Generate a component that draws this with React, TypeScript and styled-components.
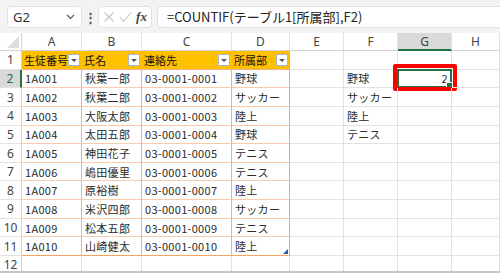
import React from "react";
import styled, { createGlobalStyle, css } from "styled-components";

const GlobalStyle = createGlobalStyle`
  html, body {
    margin: 0;
    padding: 0;
    background: #ffffff;
  }
  body {
    font-family: "Noto Sans CJK JP", "Noto Sans", sans-serif;
  }
`;

const Frame = styled.div`
  width: 500px;
  height: 274px;
  overflow: hidden;
  display: flex;
  flex-direction: column;
  background: #ffffff;
`;

const Toolbar = styled.div`
  height: 33px;
  background: #f3f3f3;
  display: flex;
  align-items: center;
  padding: 0 0 0 7px;
  box-sizing: border-box;
  flex-shrink: 0;
`;

const NameBox = styled.div`
  width: 75px;
  height: 22px;
  background: #ffffff;
  border: 1px solid #e1e1e1;
  border-radius: 4px;
  box-sizing: border-box;
  display: flex;
  align-items: center;
  justify-content: space-between;
  padding: 0 6px 0 5px;
  font-family: "Noto Sans", sans-serif;
  font-size: 13px;
  color: #333333;
`;

const Dots = styled.div`
  width: 16px;
  display: flex;
  justify-content: center;
  color: #555555;
  font-size: 13px;
  font-weight: bold;
`;

const FxBox = styled.div`
  width: 54px;
  height: 22px;
  background: #ffffff;
  border: 1px solid #e1e1e1;
  border-radius: 4px;
  box-sizing: border-box;
  display: flex;
  align-items: center;
  justify-content: space-around;
  padding: 0 2px;
  margin-right: 5px;
`;

const FxLabel = styled.span`
  font-family: "Liberation Serif", serif;
  font-style: italic;
  font-weight: bold;
  font-size: 13px;
  color: #444444;
`;

const FormulaBox = styled.div`
  flex: 1;
  height: 22px;
  background: #ffffff;
  border: 1px solid #e1e1e1;
  border-right: none;
  border-radius: 4px 0 0 4px;
  box-sizing: border-box;
  display: flex;
  align-items: center;
  padding-left: 9px;
  font-size: 13px;
  color: #222222;
  white-space: nowrap;
`;

const Sheet = styled.div`
  display: grid;
  grid-template-columns: 22px 60px 60px 90px 58px 54px 54px 54px 48px;
  grid-auto-rows: 18.65px;
  grid-template-rows: 18px;
  border-bottom: 2px solid #c6c6c6;
  flex-shrink: 0;
  height: 240px;
  overflow: hidden;
  box-sizing: border-box;
`;

type CellKind = "plain" | "head" | "data";

const Cell = styled.div<{
  $kind?: CellKind;
  $right?: boolean;
  $lastCol?: boolean;
  $lastRow?: boolean;
}>`
  position: relative;
  box-sizing: border-box;
  display: flex;
  align-items: center;
  padding: 0 3px;
  font-size: 11px;
  letter-spacing: 0.3px;
  color: #2a2a2a;
  white-space: nowrap;
  overflow: visible;
  border-right: 1px solid #e2e2e2;
  border-bottom: 1px solid #e2e2e2;
  justify-content: ${(p) => (p.$right ? "flex-end" : "flex-start")};

  ${(p) =>
    p.$kind === "head" &&
    css`
      background: #ffc000;
      color: #111111;
      letter-spacing: 0;
      padding-left: 2px;
      border-right: 1px solid #f4b084;
      border-bottom: 1px solid #f4b084;
    `}

  ${(p) =>
    p.$kind === "data" &&
    css`
      border-right: 1px solid #f4b084;
      border-bottom: 1px solid #f8cbad;
    `}

  ${(p) =>
    p.$lastCol &&
    css`
      border-right: 1px solid #f4a460;
    `}

  ${(p) =>
    p.$lastRow &&
    css`
      border-bottom: 1px solid #f4a460;
    `}
`;

const ColHeader = styled.div<{ $selected?: boolean }>`
  box-sizing: border-box;
  display: flex;
  align-items: center;
  justify-content: center;
  font-family: "Noto Sans", sans-serif;
  font-size: 12px;
  color: #444444;
  background: ${(p) => (p.$selected ? "#d9d9d9" : "#ffffff")};
  border-right: 1px solid #e2e2e2;
  border-bottom: ${(p) => (p.$selected ? "2px solid #217346" : "1px solid #d4d4d4")};
`;

const Corner = styled.div`
  position: relative;
  box-sizing: border-box;
  background: #ffffff;
  border-right: 1px solid #d4d4d4;
  border-bottom: 1px solid #d4d4d4;

  &::after {
    content: "";
    position: absolute;
    right: 2px;
    bottom: 2px;
    width: 0;
    height: 0;
    border-left: 12px solid transparent;
    border-bottom: 12px solid #dedede;
  }
`;

const RowHeader = styled.div<{ $selected?: boolean }>`
  box-sizing: border-box;
  display: flex;
  align-items: center;
  justify-content: center;
  font-family: "Noto Sans", sans-serif;
  font-size: 12px;
  color: ${(p) => (p.$selected ? "#217346" : "#444444")};
  background: ${(p) => (p.$selected ? "#d9d9d9" : "#ffffff")};
  border-right: ${(p) => (p.$selected ? "2px solid #217346" : "1px solid #d4d4d4")};
  border-bottom: 1px solid #e2e2e2;
`;

const FilterButton = styled.span`
  position: absolute;
  right: 1px;
  top: 3px;
  width: 12px;
  height: 12px;
  background: #ffffff;
  border: 1px solid #a9b5c9;
  box-sizing: border-box;
  display: flex;
  align-items: center;
  justify-content: center;

  &::after {
    content: "";
    border-left: 3px solid transparent;
    border-right: 3px solid transparent;
    border-top: 3px solid #555555;
  }
`;

const ResizeHandle = styled.span`
  position: absolute;
  right: 1px;
  bottom: 1px;
  width: 0;
  height: 0;
  border-left: 5px solid transparent;
  border-bottom: 5px solid #2f4fb3;
`;

const Highlight = styled.div`
  position: absolute;
  left: -5px;
  top: -6px;
  right: -6px;
  bottom: -4px;
  border: 4px solid #ff0000;
  border-radius: 2px;
  pointer-events: none;
`;

const Selection = styled.div`
  position: absolute;
  inset: -1px;
  border: 2px solid #217346;
  pointer-events: none;

  &::after {
    content: "";
    position: absolute;
    right: -3px;
    bottom: -3px;
    width: 5px;
    height: 5px;
    background: #217346;
    border: 1px solid #ffffff;
  }
`;

const Chevron = () => (
  <svg width="9" height="6" viewBox="0 0 9 6">
    <path d="M1 1l3.5 3.5L8 1" fill="none" stroke="#555" strokeWidth="1.2" />
  </svg>
);

const CrossIcon = () => (
  <svg width="12" height="12" viewBox="0 0 12 12">
    <path d="M1.5 1.5l9 9M10.5 1.5l-9 9" stroke="#c4c4c4" strokeWidth="1.1" />
  </svg>
);

const CheckIcon = () => (
  <svg width="13" height="12" viewBox="0 0 13 12">
    <path d="M1 6.5l3.5 4L12 1.5" fill="none" stroke="#c4c4c4" strokeWidth="1.1" />
  </svg>
);

const headers = ["生徒番号", "氏名", "連絡先", "所属部"];

const rows = [
  ["1A001", "秋葉一郎", "03-0001-0001", "野球"],
  ["1A002", "秋葉二郎", "03-0001-0002", "サッカー"],
  ["1A003", "大阪太郎", "03-0001-0003", "陸上"],
  ["1A004", "太田五郎", "03-0001-0004", "野球"],
  ["1A005", "神田花子", "03-0001-0005", "テニス"],
  ["1A006", "嶋田優里", "03-0001-0006", "テニス"],
  ["1A007", "原裕樹", "03-0001-0007", "陸上"],
  ["1A008", "米沢四郎", "03-0001-0008", "サッカー"],
  ["1A009", "松本五郎", "03-0001-0009", "テニス"],
  ["1A010", "山崎健太", "03-0001-0010", "陸上"],
];

const lookup = ["野球", "サッカー", "陸上", "テニス"];
const columns = ["A", "B", "C", "D", "E", "F", "G", "H"];

const App: React.FC = () => {
  const sheetRows: React.ReactNode[] = [];

  // row 1: table header
  sheetRows.push(
    <React.Fragment key="r1">
      <RowHeader>1</RowHeader>
      {headers.map((h, i) => (
        <Cell key={h} $kind="head" $lastCol={i === 3}>
          {h}
          <FilterButton />
        </Cell>
      ))}
      <Cell />
      <Cell />
      <Cell />
      <Cell />
    </React.Fragment>
  );

  rows.forEach((r, ri) => {
    const rowNo = ri + 2;
    const last = ri === rows.length - 1;
    sheetRows.push(
      <React.Fragment key={`r${rowNo}`}>
        <RowHeader $selected={rowNo === 2}>{rowNo}</RowHeader>
        {r.map((v, ci) => (
          <Cell key={ci} $kind="data" $lastCol={ci === 3} $lastRow={last}>
            {v}
            {last && ci === 3 && <ResizeHandle />}
          </Cell>
        ))}
        <Cell />
        <Cell>{lookup[ri] ?? ""}</Cell>
        <Cell $right>
          {rowNo === 2 && (
            <>
              2
              <Selection />
              <Highlight />
            </>
          )}
        </Cell>
        <Cell />
      </React.Fragment>
    );
  });

  sheetRows.push(
    <React.Fragment key="r12">
      <RowHeader>12</RowHeader>
      {columns.map((c) => (
        <Cell key={c} />
      ))}
    </React.Fragment>
  );

  return (
    <>
      <GlobalStyle />
      <Frame>
        <Toolbar>
          <NameBox>
            G2
            <Chevron />
          </NameBox>
          <Dots>⋮</Dots>
          <FxBox>
            <CrossIcon />
            <CheckIcon />
            <FxLabel>fx</FxLabel>
          </FxBox>
          <FormulaBox>=COUNTIF(テーブル1[所属部],F2)</FormulaBox>
        </Toolbar>
        <Sheet>
          <Corner />
          {columns.map((c) => (
            <ColHeader key={c} $selected={c === "G"}>
              {c}
            </ColHeader>
          ))}
          {sheetRows}
        </Sheet>
      </Frame>
    </>
  );
};

export default App;
